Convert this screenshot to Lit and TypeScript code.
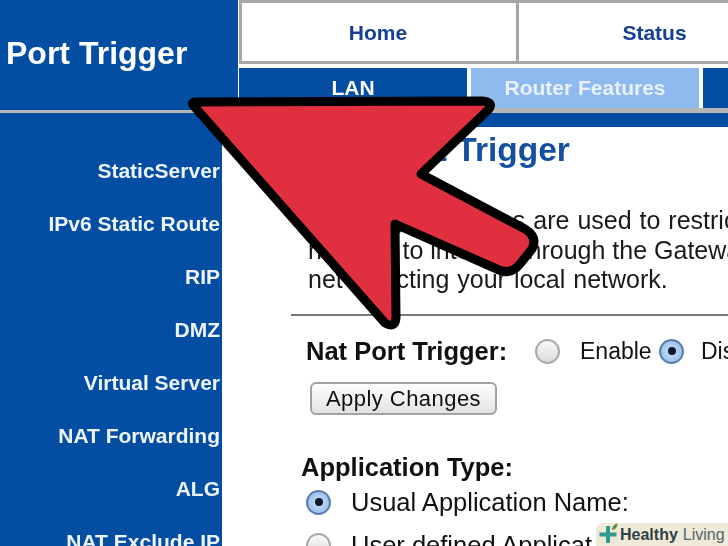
import { LitElement, html, css, svg } from "lit";
import { customElement } from "lit/decorators.js";

const SIDE = ["StaticServer", "IPv6 Static Route", "RIP", "DMZ", "Virtual Server", "NAT Forwarding", "ALG", "NAT Exclude IP"];

@customElement("app-root")
export class AppRoot extends LitElement {
  static styles = css`
    :host { display: block; width: 728px; height: 546px; overflow: hidden; position: relative; background: #fff;
      font-family: "Liberation Sans", Arial, sans-serif; color: #111; }
    .page { width: 728px; height: 546px; display: flex; flex-direction: column; overflow: hidden; filter: blur(0.45px); }
    .head { display: flex; height: 113px; flex: none; }
    .brand { width: 238px; flex: none; background: #034ea2; color: #fff; font-weight: 700; font-size: 32px;
      padding: 35px 0 0 6px; box-sizing: border-box; line-height: 36px; border-bottom: 3px solid #b4b6b8; }
    .nav { flex: 1; display: flex; flex-direction: column; padding-left: 1px; min-width: 0; }
    .tabs { height: 64px; flex: none; display: flex; box-sizing: border-box; border: 3px solid #a6a6a6; border-right: 0; }
    .tab { display: flex; align-items: center; justify-content: center; color: #143f92; font-weight: 700; font-size: 21px; background: #fff; padding-top: 2px; box-sizing: border-box; }
    .tab.home { width: 277px; border-right: 3px solid #a6a6a6; padding-right: 2px; }
    .tab.status { flex: 1; padding-left: 62px; }
    .sub { display: flex; gap: 4px; height: 40px; margin-top: 4px; flex: none; }
    .s { display: flex; align-items: center; justify-content: center; background: #034ea2; color: #fff; font-weight: 700; font-size: 21px; width: 228px; flex: none; }
    .s.on { background: #8ebaf0; color: #e8f1fc; }
    .rule { height: 5px; background: #b4b6b8; flex: none; }
    .body { flex: 1; display: flex; min-height: 0; }
    .side { width: 222px; flex: none; background: #034ea2; display: flex; flex-direction: column; align-items: flex-end;
      padding: 45px 2px 0 0; box-sizing: border-box; }
    .side div { height: 53px; line-height: 26px; color: #eef4fb; font-weight: 700; font-size: 21px; white-space: nowrap; flex: none; }
    .main { flex: 1; min-width: 0; display: flex; flex-direction: column; }
    .bar { height: 14px; background: #034ea2; flex: none; }
    .title { margin: 3px 0 0 158px; color: #14509f; font-weight: 700; font-size: 33.5px; line-height: 40px; white-space: nowrap; }
    .intro { margin: 36px 0 0 86px; font-size: 25px; line-height: 29.5px; white-space: nowrap; color: #1a1a1a; }
    .first, .third { word-spacing: 1px; }
    .hr { height: 2px; background: #777; margin: 19px 0 0 69px; flex: none; }
    .row { display: flex; align-items: center; white-space: nowrap; }
    .nat { margin: 21px 0 0 84px; font-size: 23px; height: 30px; }
    .nat b { width: 229px; flex: none; font-size: 25.5px; }
    .radio { width: 25px; height: 25px; border-radius: 50%; box-sizing: border-box; border: 2px solid #a9a9a9; flex: none;
      background: linear-gradient(#f8f8f8, #dcdcdc); display: flex; align-items: center; justify-content: center; }
    .radio.on { border-color: #5c7fa8; background: radial-gradient(circle, #cfe2f8 0%, #9cc3ef 70%, #6f9fd6 100%); }
    .radio.on::after { content: ""; width: 8px; height: 8px; border-radius: 50%; background: #10182a; }
    .enable { width: 79px; margin-left: 20px; flex: none; }
    .dis { margin-left: 17px; }
    .btn { margin: 16px 0 0 88px; width: 187px; height: 33px; box-sizing: border-box; border: 2px solid #a2a2a2; border-radius: 6px;
      background: linear-gradient(#fdfdfd 0%, #f0f0f0 55%, #e2e2e2 100%); font: 22px "Liberation Sans", Arial, sans-serif; color: #111; padding: 2px 0 0; letter-spacing: .45px; flex: none; }
    .apptype { margin: 37px 0 0 79px; font-size: 25.5px; font-weight: 700; line-height: 30px; }
    .opt { margin: 6px 0 0 84px; font-size: 25.5px; height: 30px; }
    .opt span { margin-left: 20px; }
    .opt + .opt { margin-top: 14px; }
    .arrow { position: absolute; left: 0; top: 0; width: 728px; height: 546px; pointer-events: none; }
    .badge { position: absolute; right: 0; bottom: 0; width: 132px; height: 23px; background: #efe9d8; border-top-left-radius: 8px;
      display: flex; align-items: center; font-size: 16px; color: #333; white-space: nowrap; box-sizing: border-box; padding-left: 3px; }
    .badge b { color: #2f3f46; }
    .badge i { font-style: normal; color: #55646a; margin-left: 5px; }
    .badge svg { flex: none; }
  `;

  render() {
    return html`
      <div class="page">
        <div class="head">
          <div class="brand">Port Trigger</div>
          <div class="nav">
            <div class="tabs"><div class="tab home">Home</div><div class="tab status">Status</div></div>
            <div class="sub"><div class="s">LAN</div><div class="s on">Router Features</div><div class="s"></div></div>
            <div class="rule"></div>
          </div>
        </div>
        <div class="body">
          <div class="side">${SIDE.map((s) => html`<div>${s}</div>`)}</div>
          <div class="main">
            <div class="bar"></div>
            <div class="title">Port Trigger</div>
            <div class="intro"><span class="first">Port Trigger Entries are used to restrict</span><br />network to internet through the Gateway<br /><span class="third">net selecting your local network.</span></div>
            <div class="hr"></div>
            <div class="row nat"><b>Nat Port Trigger:</b><div class="radio"></div><span class="enable">Enable</span><div class="radio on"></div><span class="dis">Disable</span></div>
            <button class="btn">Apply Changes</button>
            <div class="apptype">Application Type:</div>
            <div class="row opt"><div class="radio on"></div><span>Usual Application Name:</span></div>
            <div class="row opt"><div class="radio"></div><span>User defined Applicat</span></div>
          </div>
        </div>
      </div>
      <svg class="arrow" viewBox="0 0 728 546">
        ${svg`<path d="M193 105 Q191 102 196 102 L482 101 Q495 102 488 110 L421 174 L525 229 Q538 237 532 249 L520 264 Q511 275 499 270 L395 224 L396 318 Q395 329 385 323 Z" fill="#e03040" stroke="#000" stroke-width="9" stroke-linejoin="round"/>`}
      </svg>
      <div class="badge">
        <svg width="21" height="23" viewBox="0 0 21 23">
          <path d="M7 3h4v6.500h6.500v4H11V20H7v-6.500H0.500v-4H7z" fill="#2f9a8f"/>
          <path d="M13 7c0-3 2-6 5.500-6.500 0 3.500-2 6-5.500 6.500z" fill="#5f8f3a"/>
        </svg>
        <b>Healthy</b><i>Living</i>
      </div>
    `;
  }
}
